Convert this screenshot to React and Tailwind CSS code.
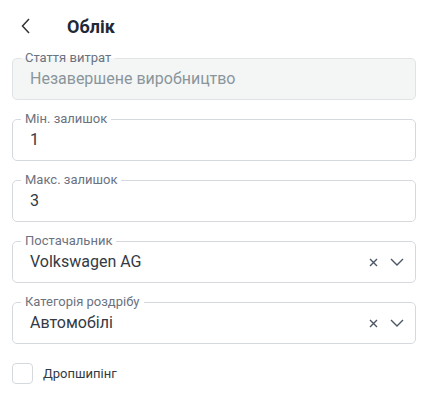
import React from "react";

function Field({ label, value, disabled, select }) {
  return (
    <fieldset
      className={`border rounded-[5px] px-[8px] pb-[6px] m-0 min-w-0 ${
        disabled ? "bg-[#f4f6f6] border-[#e1e4e6]" : "bg-white border-[#d5d9dd]"
      }`}
    >
      <legend className="px-[4px] text-[13px] leading-[14px] text-[#6b7280]">
        {label}
      </legend>
      <div className="flex items-center h-[28px] pl-[9px] pr-[3px]">
        <span
          className={`flex-1 text-[16px] leading-[28px] ${
            disabled ? "text-[#8a959b]" : "text-[#333a44]"
          }`}
        >
          {value}
        </span>
        {select && (
          <div className="flex items-center gap-[12px] text-[#4b5563]">
            <svg width="9" height="9" viewBox="0 0 9 9" fill="none">
              <path d="M1 1L8 8M8 1L1 8" stroke="currentColor" strokeWidth="1.4" />
            </svg>
            <svg width="14" height="8" viewBox="0 0 14 8" fill="none">
              <path d="M1 1L7 7L13 1" stroke="currentColor" strokeWidth="1.4" />
            </svg>
          </div>
        )}
      </div>
    </fieldset>
  );
}

export default function App() {
  const fields = [
    { label: "Стаття витрат", value: "Незавершене виробництво", disabled: true },
    { label: "Мін. залишок", value: "1" },
    { label: "Макс. залишок", value: "3" },
    { label: "Постачальник", value: "Volkswagen AG", select: true },
    { label: "Категорія роздрібу", value: "Автомобілі", select: true },
  ];

  return (
    <div className="w-[426px] h-[397px] bg-white font-['Roboto',sans-serif] pl-[12px] pr-[10px]">
      {/* Header */}
      <div className="flex items-center h-[51px] pt-[1px]">
        <svg width="10" height="16" viewBox="0 0 10 16" fill="none" className="ml-[9px] text-[#333]">
          <path d="M8 1L1.5 8L8 15" stroke="currentColor" strokeWidth="1.5" />
        </svg>
        <h1 className="ml-[36px] text-[18px] font-bold text-[#1f2937]">Облік</h1>
      </div>

      {/* Fields */}
      <div className="flex flex-col gap-[12px]">
        {fields.map((f) => (
          <Field key={f.label} {...f} />
        ))}
      </div>

      {/* Checkbox */}
      <label className="flex items-center gap-[10px] mt-[19px]">
        <span className="w-[21px] h-[21px] rounded-[4px] border border-[#d5d9dd] bg-white" />
        <span className="text-[13px] text-[#333a44]">Дропшипінг</span>
      </label>
    </div>
  );
}
